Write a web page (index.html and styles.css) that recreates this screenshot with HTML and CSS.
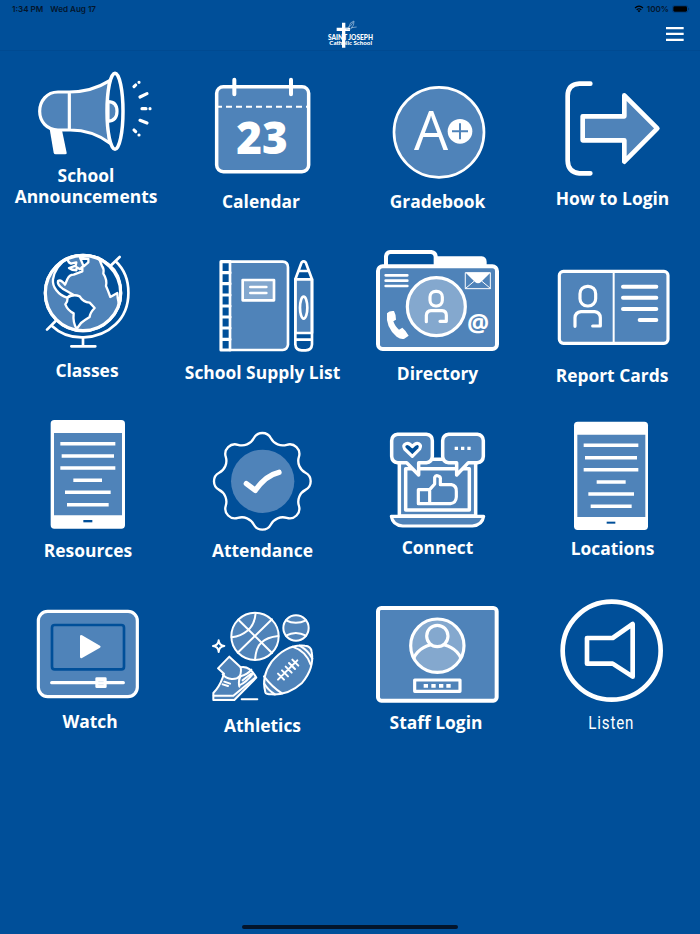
FILE: index.html
```
<!DOCTYPE html>
<html lang="en">

<head>
    <meta charset="UTF-8">
    <meta name="viewport" content="width=device-width, initial-scale=1.0">
    <title>Saint Joseph Catholic School</title>
    <link rel="stylesheet" href="styles.css">
</head>

<body>
    <div class="status-bar">
        <div class="status-left">
            <span>1:34 PM</span>
            <span>Wed Aug 17</span>
        </div>
        <div class="status-right">
            <svg width="10" height="8" viewBox="0 0 30 24">
                <path class="wifi" d="M3 9Q15 -2 27 9M8 14.500Q15 8 22 14.500" />
                <path class="ink" d="M15 22L10.500 17.500Q15 14 19.500 17.500Z" />
            </svg>
            <span>100%</span>
            <svg width="18" height="8" viewBox="0 0 54 24">
                <rect class="battery" x="1" y="2" width="47" height="20" rx="6" />
                <rect class="ink" x="4" y="4" width="41" height="16" rx="4" />
                <path class="ink" d="M50 9Q53 12 50 15Z" />
            </svg>
        </div>
    </div>

    <header class="nav">
        <svg class="logo" width="48" height="30" viewBox="77 60 144 90">
            <path class="solid" d="M125 68h10v15h14v10h-14v50h-10v-50h-16v-10h16z" />
            <path class="dove" d="M133 84Q142 87 146 80Q148 66 161 63Q162 77 153 83L169 81M142 84Q151 80 159 66M137 87Q148 93 157 82" />
            <text class="logo-name" x="83" y="118.500" textLength="135" lengthAdjust="spacingAndGlyphs">SAINT JOSEPH</text>
            <text class="logo-sub" x="87" y="136" textLength="128" lengthAdjust="spacingAndGlyphs">Catholic School</text>
        </svg>
        <button class="menu-btn" aria-label="Menu">
            <svg width="18" height="16" viewBox="0 0 54 48">
                <path class="solid" d="M0 3h53v7H0zM0 20h53v7H0zM0 38h53v7H0z" />
            </svg>
        </button>
    </header>

    <main class="grid">
        <a class="tile left-2">
            <svg width="175" height="114" viewBox="0 -27 525 342">
                <path class="solid" d="M149 207L186 211L200 278Q201 283 195 283L167 283Q162 283 161 278Z" />
                <path class="icon w9" d="M208 96H174C140 96 119 124 119 154S140 210 174 210H208Q275 209 329 249Q317 157 329 62Q275 96 208 96ZM208 96V210" />
                <ellipse class="icon w10 dark" cx="345" cy="154" rx="24" ry="114" />
                <path class="icon w9" d="M324 125Q351 125 351 154T324 184Z" />
                <path class="line w9" d="M402 80L407 75M417 67h.1M420 111L441 101M426 146H438M450 146h.1M420 181L441 189M402 210L407 215M417 225h.1" />
            </svg>
            <span class="label label-two">School<br>Announcements</span>
        </a>

        <a class="tile left-3">
            <svg width="175" height="139" viewBox="525 -27 525 417">
                <rect class="icon w10" x="650" y="80" width="276" height="255" rx="20" />
                <path class="line w12" d="M703 59V103M873 59V103" />
                <path class="line w6 butt" stroke-dasharray="18 12" d="M648 140H928" />
                <text class="day" x="786" y="281">23</text>
            </svg>
            <span class="label">Calendar</span>
        </a>

        <a class="tile">
            <svg width="175" height="139" viewBox="0 -27 525 417">
                <circle class="icon w8" cx="267" cy="217" r="135" />
                <text class="grade" x="243" y="271">A</text>
                <circle class="solid" cx="330" cy="214" r="37" />
                <path class="plus" d="M306 214H354M330 190V238" />
            </svg>
            <span class="label">Gradebook</span>
        </a>

        <a class="tile">
            <svg width="175" height="136" viewBox="525 -27 525 408">
                <path class="line w14" d="M721 71H688Q653 73 653 108V302Q654 337 688 340H721" />
                <path class="icon w14" d="M698 169H823V106L922 205L823 305V241H698Z" />
            </svg>
            <span class="label">How to Login</span>
        </a>

        <a class="tile left-1">
            <svg width="175" height="133" viewBox="0 -42 525 399">
                <circle class="icon w8" cx="249" cy="159" r="114" />
                <path class="icon w7 dark" d="M203 54Q165 79 159 118C156 140 175 165 201 173Q208 165 220 164L188 146Q171 134 174 123Q183 117 195 134L202 118Q208 104 221 104L247 94L247 80L240 88L230 82L229 91Q216 91 207 84L227 77L229 67L213 71Q202 66 203 54Z" />
                <path class="icon w7 dark" d="M203 173Q220 161 239 169Q249 186 269 188L284 204Q270 218 269 231Q254 240 243 249L230 267Q218 247 221 220Q203 211 196 193Q203 185 203 173Z" />
                <path class="icon w7 dark" d="M277 50L296 53L306 78Q313 87 310 101Q322 119 318 138Q324 151 331 171L352 159Q352 171 356 188Q370 148 354 108Q334 66 288 53" />
                <path class="icon w7 dark" d="M240 53L265 57L265 67L251 79Z" />
                <circle class="line w9" cx="249" cy="159" r="113" />
                <path class="line w8" d="M347 64C398 112 398 204 347 253S207 307 156 258M331 78L359 51M167 243L141 269M249 297V319M214 319H286" />
            </svg>
            <span class="label">Classes</span>
        </a>

        <a class="tile">
            <svg width="175" height="135" viewBox="525 -42 525 405">
                <path class="icon w8" d="M690 65H848Q864 66 864 82V314Q862 329 848 330H690Z" />
                <path class="line w9" d="M690 65H663V330H690M663 98H690M663 131H690M663 165H690M663 198H690M663 231H690M663 264H690M663 298H690" />
                <rect class="icon w8 pale" x="728" y="120" width="94" height="61" />
                <path class="line w8" d="M751 141H799M751 159H799" />
                <path class="icon w8" d="M886 118H936V279H886Z" />
                <path class="line w8" d="M886 118L905 67Q911 61 917 67L936 118V313Q935 330 917 331H905Q887 330 886 313ZM896 93H927M886 299H936" />
                <ellipse class="line w8" cx="911" cy="203" rx="11" ry="33" />
            </svg>
            <span class="label">School Supply List</span>
        </a>

        <a class="tile">
            <svg width="175" height="136" viewBox="0 -42 525 408">
                <path class="solid" d="M255 49H395Q410 51 410 66V78H255Z" />
                <path class="icon w12 dark" d="M108 78V50Q109 37 121 36H244Q257 38 257 50V78" />
                <rect class="icon w12" x="84" y="79" width="357" height="248" rx="14" />
                <path class="line w8" d="M107 106H172M107 122H172M107 138H172" />
                <circle class="icon w9 pale" cx="259" cy="200" r="87" />
                <rect class="line w9" x="240" y="154" width="37" height="44" rx="17" />
                <path class="line w9" d="M229 245V226Q230 213 243 212H276Q289 213 289 226V244H270" />
                <rect class="line w3" x="347" y="98" width="74" height="48" />
                <path class="solid" d="M347 98H421L393 126Q384 134 375 126Z" />
                <path class="line w3" d="M347 145L372 124M421 145L396 124" />
                <path class="solid" d="M111 220Q119 211 132 213Q139 226 138 239L130 244Q136 261 147 269L157 263Q169 273 176 287L163 296Q153 299 140 290Q106 262 111 220Z" />
                <text class="at" x="384" y="277">@</text>
            </svg>
            <span class="label">Directory</span>
        </a>

        <a class="tile left-1">
            <svg width="175" height="138" viewBox="525 -42 525 414">
                <rect class="icon w9" x="628" y="94" width="326" height="216" rx="12" />
                <path class="line w6" d="M791 94V310" />
                <rect class="line w9" x="690" y="139" width="47" height="59" rx="22" />
                <path class="line w9" d="M675 259V233Q676 217 693 215H734Q750 217 751 233V258H728" />
                <path class="line w12" d="M819 140H919M819 173H919M819 207H919M869 240H919" />
            </svg>
            <span class="label">Report Cards</span>
        </a>

        <a class="tile right-1">
            <svg width="175" height="138" viewBox="0 -27 525 414">
                <rect class="solid" x="152" y="30" width="223" height="326" rx="11" />
                <path class="fill" d="M162 69H366V316H162Z" />
                <path class="line w10 butt" d="M181 101H346M185 138H342M181 174H346M220 211H306M195 247H332M201 284H326" />
                <path class="bg-fill" d="M250 330H277V337H250Z" />
            </svg>
            <span class="label">Resources</span>
        </a>

        <a class="tile">
            <svg width="175" height="138" viewBox="525 -27 525 414">
                <path class="line w7" d="M761.300 84.500A29 29 0 0 1 812.700 84.500A40 40 0 0 0 860.300 104.300A29 29 0 0 1 896.700 140.700A40 40 0 0 0 916.500 188.300A29 29 0 0 1 916.500 239.700A40 40 0 0 0 896.700 287.300A29 29 0 0 1 860.300 323.700A40 40 0 0 0 812.700 343.500A29 29 0 0 1 761.300 343.500A40 40 0 0 0 713.700 323.700A29 29 0 0 1 677.300 287.300A40 40 0 0 0 657.500 239.700A29 29 0 0 1 657.500 188.300A40 40 0 0 0 677.300 140.700A29 29 0 0 1 713.700 104.300A40 40 0 0 0 761.300 84.500Z" />
                <circle class="fill" cx="788" cy="214" r="95" />
                <path class="line w16" d="M739 221L766 241Q797 196 837 187" />
            </svg>
            <span class="label">Attendance</span>
        </a>

        <a class="tile">
            <svg width="175" height="135" viewBox="0 -27 525 405">
                <path class="icon w10" d="M148 318V148H377V318Z" />
                <path class="icon w10" d="M167 300V176H358V300Z" />
                <path class="icon w9" d="M124 319H401Q397 346 367 348H158Q128 346 124 319Z" />
                <path class="icon w10" d="M143 73H229Q247 75 247 92V139Q246 156 229 158H206V195L170 158H143Q126 156 125 139V92Q126 75 143 73Z" />
                <path class="icon w10" d="M296 73H382Q399 75 400 92V139Q399 156 382 158H355L320 195V158H296Q279 156 278 139V92Q279 75 296 73Z" />
                <path class="icon w9 dark" d="M187 139L164 117Q157 105 168 101Q178 98 187 110Q196 98 206 101Q215 106 209 117Z" />
                <path class="solid" d="M314 110h10v10h-10zM333 110h10v10h-10zM352 110h10v10h-10z" />
                <path class="icon w9" d="M239 239L254 222V202Q257 195 265 198Q273 200 271 211V224H304Q320 227 319 244V261Q318 279 301 281H239ZM205 239H239V281H205Z" />
            </svg>
            <span class="label">Connect</span>
        </a>

        <a class="tile">
            <svg width="175" height="136" viewBox="525 -27 525 408">
                <rect class="solid" x="672" y="35" width="222" height="325" rx="11" />
                <path class="fill" d="M682 74H886V321H682Z" />
                <path class="line w10 butt" d="M701 106H865M705 143H861M701 179H865M740 216H827M715 252H852M722 289H845" />
                <path class="bg-fill" d="M770 335H796V341H770Z" />
            </svg>
            <span class="label">Locations</span>
        </a>

        <a class="tile right-2">
            <svg width="175" height="134" viewBox="0 -42 525 402">
                <rect class="icon w9" x="115" y="64" width="297" height="256" rx="28" />
                <rect class="screen" x="156" y="105" width="216" height="133" rx="8" />
                <path class="solid" d="M240 138Q241 134 246 136L300 167Q304 170 300 173L246 204Q241 206 240 201Z" />
                <path class="line w9" d="M155 278H370" />
                <rect class="solid" x="286" y="262" width="34" height="32" rx="4" />
                <path class="slot" d="M295 275H311M295 284H311" />
            </svg>
            <span class="label">Watch</span>
        </a>

        <a class="tile">
            <svg width="175" height="138" viewBox="525 -42 525 414">
                <circle class="icon w6" cx="765" cy="139" r="71" />
                <path class="line w6" d="M715 89L816 189M816 88L713 188M767 69Q764 105 742 122Q723 138 695 142M835 138Q800 142 785 157Q768 172 765 209" />
                <circle class="icon w6" cx="888" cy="114" r="38" />
                <path class="line w6" d="M858 91Q887 106 918 91M858 137Q887 121 918 137" />
                <path class="icon w6" d="M796 307Q783 260 815 215Q860 161 915 167Q933 168 935 185Q944 235 905 280Q865 316 815 313Q798 313 796 307Z" />
                <path class="line w6" d="M793 281Q805 301 825 313M792 259Q815 290 846 310M877 170Q918 183 932 224M899 167Q925 182 937 206" />
                <path class="line w6" d="M834 269L892 211M834 251L852 269M846 241L864 259M857 230L875 248M867 219L885 237M877 209L895 227" />
                <path class="icon w6" d="M688 200L722 232Q749 226 769 263L703 330H640V309Q658 291 668 263L672 251L654 235Z" />
                <path class="line w6" d="M722 232Q728 269 695 267Q678 265 668 253M641 317H700L767 262M718 290Q714 269 722 259Q743 253 754 239M668 283L684 288M673 275L690 281M718 286Q738 278 759 251M728 271L753 251" />
                <path class="line w6" d="M725 328H772" />
                <path class="line w6" d="M656 151Q657 166 673 168Q657 170 656 186Q655 170 639 168Q655 166 656 151Z" />
            </svg>
            <span class="label">Athletics</span>
        </a>

        <a class="tile left-3">
            <svg width="175" height="135" viewBox="0 -42 525 405">
                <rect class="icon w12" x="84" y="54" width="356" height="278" rx="10" />
                <circle class="icon w9 pale" cx="262" cy="167" r="80" />
                <path class="line w9" d="M192 203C216 149 308 149 332 203" />
                <circle class="icon w9 pale" cx="262" cy="138" r="32" />
                <rect class="line w9" x="194" y="270" width="136" height="34" />
                <path class="solid" d="M221 282h13v11h-13zM244 282h13v11h-13zM267 282h13v11h-13zM289 282h13v11h-13z" />
            </svg>
            <span class="label">Staff Login</span>
        </a>

        <a class="tile left-3">
            <svg width="175" height="135" viewBox="525 -42 525 405">
                <circle class="line w14" cx="785" cy="182" r="147" />
                <path class="line w14" d="M711 144H788L848 102V260L788 221H711Z" />
            </svg>
            <span class="label label-narrow">Listen</span>
        </a>
    </main>

    <div class="home-indicator"></div>
</body>

</html>
```
FILE: styles.css
```
body {
    font-family: "Open Sans", "Noto Sans", sans-serif;
    background-color: #004f99;
    color: #fff;
    margin: 0;
    height: 934px;
    display: flex;
    flex-direction: column;
    overflow: hidden;
}

/* status bar */
.status-bar {
    display: flex;
    justify-content: space-between;
    align-items: center;
    height: 17px;
    padding: 0 10px 0 12px;
    box-sizing: border-box;
    font-family: Inter, sans-serif;
    font-size: 8.1px;
    font-weight: 600;
    color: #04152b;
}

.status-left {
    display: flex;
    gap: 7px;
}

.status-right {
    display: flex;
    align-items: center;
    gap: 3px;
}

.ink {
    fill: #000;
}

.wifi {
    fill: none;
    stroke: #000;
    stroke-width: 3.5;
}

.battery {
    fill: none;
    stroke: #003a75;
    stroke-width: 2;
}

/* header */
.nav {
    display: grid;
    grid-template-columns: 1fr 48px 1fr;
    height: 34px;
    padding: 3px 16px 0;
    box-sizing: border-box;
    border-bottom: 1px solid #004a91;
}

.logo {
    grid-column: 2;
}

.dove {
    fill: none;
    stroke: #a9c4e0;
    stroke-width: 2;
}

.logo-name {
    font-family: Lato, sans-serif;
    font-size: 21px;
    font-weight: 900;
    fill: #fff;
}

.logo-sub {
    font-family: Lato, sans-serif;
    font-size: 17px;
    font-weight: 900;
    fill: #fff;
}

.menu-btn {
    display: flex;
    justify-self: end;
    align-items: flex-start;
    padding: 6px 0 0;
    background: none;
    border: none;
}

/* tiles */
.grid {
    display: grid;
    grid-template-columns: repeat(4, 175px);
    grid-auto-rows: 175px;
    flex: 1;
}

.tile {
    display: flex;
    flex-direction: column;
}

.label {
    margin-top: 1px;
    font-size: 17.4px;
    font-weight: 700;
    line-height: 21px;
    text-align: center;
    white-space: nowrap;
}

.label-two {
    margin-top: 0;
}

.label-narrow {
    font-family: Roboto, sans-serif;
    font-size: 18px;
    font-weight: 400;
    letter-spacing: 1px;
    transform: scaleX(0.84);
}

.left-1 .label {
    padding-right: 1px;
}

.left-2 .label,
.left-3 .label {
    padding-right: 3px;
}

.right-1 .label {
    padding-left: 1px;
}

.right-2 .label {
    padding-left: 5px;
}

/* icons */
.icon {
    fill: #4f83b9;
    stroke: #fff;
    stroke-linejoin: round;
    stroke-linecap: round;
}

.line {
    fill: none;
    stroke: #fff;
    stroke-linejoin: round;
    stroke-linecap: round;
}

.solid {
    fill: #fff;
}

.fill {
    fill: #4f83b9;
}

.pale {
    fill: #84a8ce;
}

.dark,
.bg-fill {
    fill: #004f99;
}

.butt {
    stroke-linecap: butt;
}

.w3 { stroke-width: 3; }
.w6 { stroke-width: 6; }
.w7 { stroke-width: 7; }
.w8 { stroke-width: 8; }
.w9 { stroke-width: 9.5; }
.w10 { stroke-width: 10.5; }
.w12 { stroke-width: 12; }
.w14 { stroke-width: 14; }
.w16 { stroke-width: 16; }

.screen {
    fill: #4f83b9;
    stroke: #004f99;
    stroke-width: 8;
}

.slot {
    stroke: #dbe6f1;
    stroke-width: 3;
}

.plus {
    stroke: #4f83b9;
    stroke-width: 6;
}

.day {
    font-size: 132px;
    font-weight: 800;
    text-anchor: middle;
    fill: #fff;
}

.grade {
    font-size: 162px;
    font-weight: 400;
    text-anchor: middle;
    fill: #fff;
}

.at {
    font-size: 74px;
    font-weight: 700;
    text-anchor: middle;
    fill: #fff;
}

.home-indicator {
    width: 216px;
    height: 4px;
    margin: 0 auto 5px;
    border-radius: 2px;
    background-color: #03152b;
}
```
